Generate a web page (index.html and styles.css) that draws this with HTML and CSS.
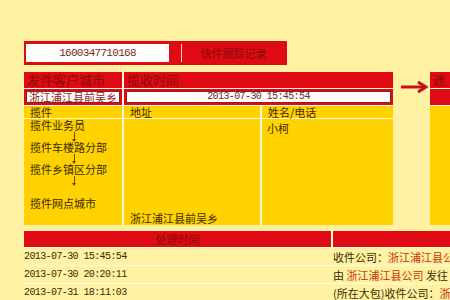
FILE: index.html
```html
<!DOCTYPE html>
<html>
<head>
<meta charset="utf-8">
<link rel="stylesheet" href="styles.css">
</head>
<body>
<div class="page">
  <div class="topbar">
    <div class="num">1600347710168</div>
    <div class="sep"></div>
    <div class="title">快件跟踪记录</div>
  </div>
  <div class="main">
    <div class="card">
      <div class="row head">
        <div class="c1">发件客户城市</div>
        <div class="c2">揽收时间</div>
      </div>
      <div class="row vals">
        <div class="c1"><div class="box">浙江浦江县前吴乡</div></div>
        <div class="c2"><div class="box mono">2013-07-30 15:45:54</div></div>
      </div>
      <div class="row labels">
        <div class="c1">揽件</div>
        <div class="ca">地址</div>
        <div class="cb">姓名/电话</div>
      </div>
      <div class="row body">
        <div class="c1 steps">
          <div class="step">揽件业务员</div>
          <div class="down"></div>
          <div class="step">揽件车楼路分部</div>
          <div class="down"></div>
          <div class="step">揽件乡镇区分部</div>
          <div class="down"></div>
          <div class="step last">揽件网点城市</div>
        </div>
        <div class="ca addr">浙江浦江县前吴乡</div>
        <div class="cb">小柯</div>
      </div>
    </div>
    <div class="arrow">
      <svg width="28" height="12" viewBox="0 0 28 12"><path d="M1 6 H24" stroke="#c8101a" stroke-width="3" fill="none"/><path d="M18 1 L26 6 L18 11" stroke="#c8101a" stroke-width="3" fill="none"/></svg>
    </div>
    <div class="card2">
      <div class="r2head">途</div>
      <div class="r2vals"></div>
      <div class="r2body"></div>
    </div>
  </div>
  <div class="log">
    <div class="lrow lhead">
      <div class="l1">处理时间</div>
      <div class="l2"></div>
    </div>
    <div class="lrow">
      <div class="l1 mono">2013-07-30 15:45:54</div>
      <div class="l2">收件公司：<span class="co">浙江浦江县公司</span></div>
    </div>
    <div class="lrow">
      <div class="l1 mono">2013-07-30 20:20:11</div>
      <div class="l2">由 <span class="co">浙江浦江县公司</span> 发往</div>
    </div>
    <div class="lrow">
      <div class="l1 mono">2013-07-31 18:11:03</div>
      <div class="l2">(所在大包)收件公司：<span class="co">浙江</span></div>
    </div>
  </div>
</div>
</body>
</html>
```
FILE: styles.css
```css
html, body {
  margin: 0;
  padding: 0;
  background: #fff3a3;
  overflow: hidden;
}
body {
  width: 450px;
  height: 300px;
  font-family: "Noto Sans CJK SC", "Noto Sans", sans-serif;
  font-size: 11px;
  color: #3d2a00;
}
.page {
  padding: 41px 0 0 24px;
}
.mono {
  font-family: "Liberation Mono", monospace;
  font-size: 10px;
  letter-spacing: -0.6px;
}
.topbar {
  width: 263px;
  height: 24px;
  box-sizing: border-box;
  background: #e00a14;
  display: flex;
  align-items: center;
  padding: 3px 2px;
}
.num {
  width: 143px;
  height: 18px;
  background: #fff;
  color: #7a2a20;
  font-family: "Liberation Mono", monospace;
  font-size: 11px;
  letter-spacing: -0.7px;
  line-height: 18px;
  text-align: center;
}
.sep {
  width: 1px;
  height: 18px;
  background: #ffd8d8;
  margin-left: 12px;
}
.title {
  flex: 1;
  text-align: center;
  color: #8a0c0c;
  font-size: 11px;
  line-height: 18px;
}
.main {
  display: flex;
  margin-top: 7px;
  align-items: flex-start;
}
.card {
  width: 372px;
  background: #fff8dc;
  display: flex;
  flex-direction: column;
  gap: 1px;
}
.row {
  display: flex;
  gap: 2px;
}
.c1 { width: 98px; flex: none; }
.c2 { flex: 1; }
.ca { width: 136px; flex: none; }
.cb { flex: 1; }
.head > div {
  background: #e00a14;
  color: #8a0c0c;
  height: 16px;
  line-height: 16px;
  font-size: 13px;
  padding-left: 3px;
  box-sizing: border-box;
  white-space: nowrap;
}
.vals > div {
  background: #e00a14;
  height: 16px;
  padding: 2px;
  box-sizing: border-box;
}
.box {
  height: 12px;
  background: #fff;
  border: 1px solid #9a1a1a;
  box-sizing: border-box;
  color: #8a1a1a;
  font-size: 11px;
  line-height: 10px;
  text-align: center;
  white-space: nowrap;
}
.box.mono {
  font-size: 10px;
  color: #6a2a2a;
}
.labels > div {
  background: #ffd200;
  height: 12px;
  line-height: 12px;
  padding-left: 6px;
  box-sizing: border-box;
}
.body > div {
  background: #ffd200;
  height: 106px;
  box-sizing: border-box;
  padding-left: 6px;
}
.steps {
  display: flex;
  flex-direction: column;
  align-items: flex-start;
}
.step {
  line-height: 13px;
}
.step.last {
  margin-top: 12px;
}
.down {
  width: 1px;
  height: 9px;
  background: #6a4a00;
  margin-left: 44px;
  position: relative;
}
.down::after {
  content: "";
  position: absolute;
  left: -2px;
  bottom: -1px;
  border-left: 2.5px solid transparent;
  border-right: 2.5px solid transparent;
  border-top: 3px solid #6a4a00;
}
.addr {
  display: flex;
  align-items: flex-end;
  line-height: 13px;
}
.body .cb {
  padding-top: 3px;
  padding-left: 5px;
  line-height: 13px;
}
.arrow {
  width: 37px;
  flex: none;
  display: flex;
  justify-content: center;
  padding-top: 9px;
  padding-left: 4px;
  box-sizing: border-box;
}
.card2 {
  width: 20px;
  flex: none;
  display: flex;
  flex-direction: column;
  gap: 1px;
  background: #fff8dc;
}
.r2head {
  height: 16px;
  background: #e00a14;
  color: #8a0c0c;
  font-size: 12px;
  line-height: 16px;
  padding-left: 3px;
  overflow: hidden;
}
.r2vals {
  height: 16px;
  background: #e00a14;
}
.r2body {
  height: 119px;
  background: #ffd200;
}
.log {
  margin-top: 6px;
  display: flex;
  flex-direction: column;
  gap: 1px;
  background: #fffbe0;
  width: 426px;
}
.lrow {
  display: flex;
  gap: 2px;
  height: 17px;
  align-items: center;
  background: #fff3a3;
}
.lrow.lhead {
  height: 16px;
  background: #fffbe0;
}
.lhead > div {
  background: #e00a14;
  height: 16px;
  line-height: 16px;
  color: #8a0c0c;
  text-align: center;
}
.l1 {
  width: 307px;
  flex: none;
  white-space: nowrap;
}
.l1.mono {
  color: #3d2a00;
}
.l2 {
  flex: 1;
  white-space: nowrap;
  overflow: hidden;
}
.co {
  color: #c8300a;
}
```
